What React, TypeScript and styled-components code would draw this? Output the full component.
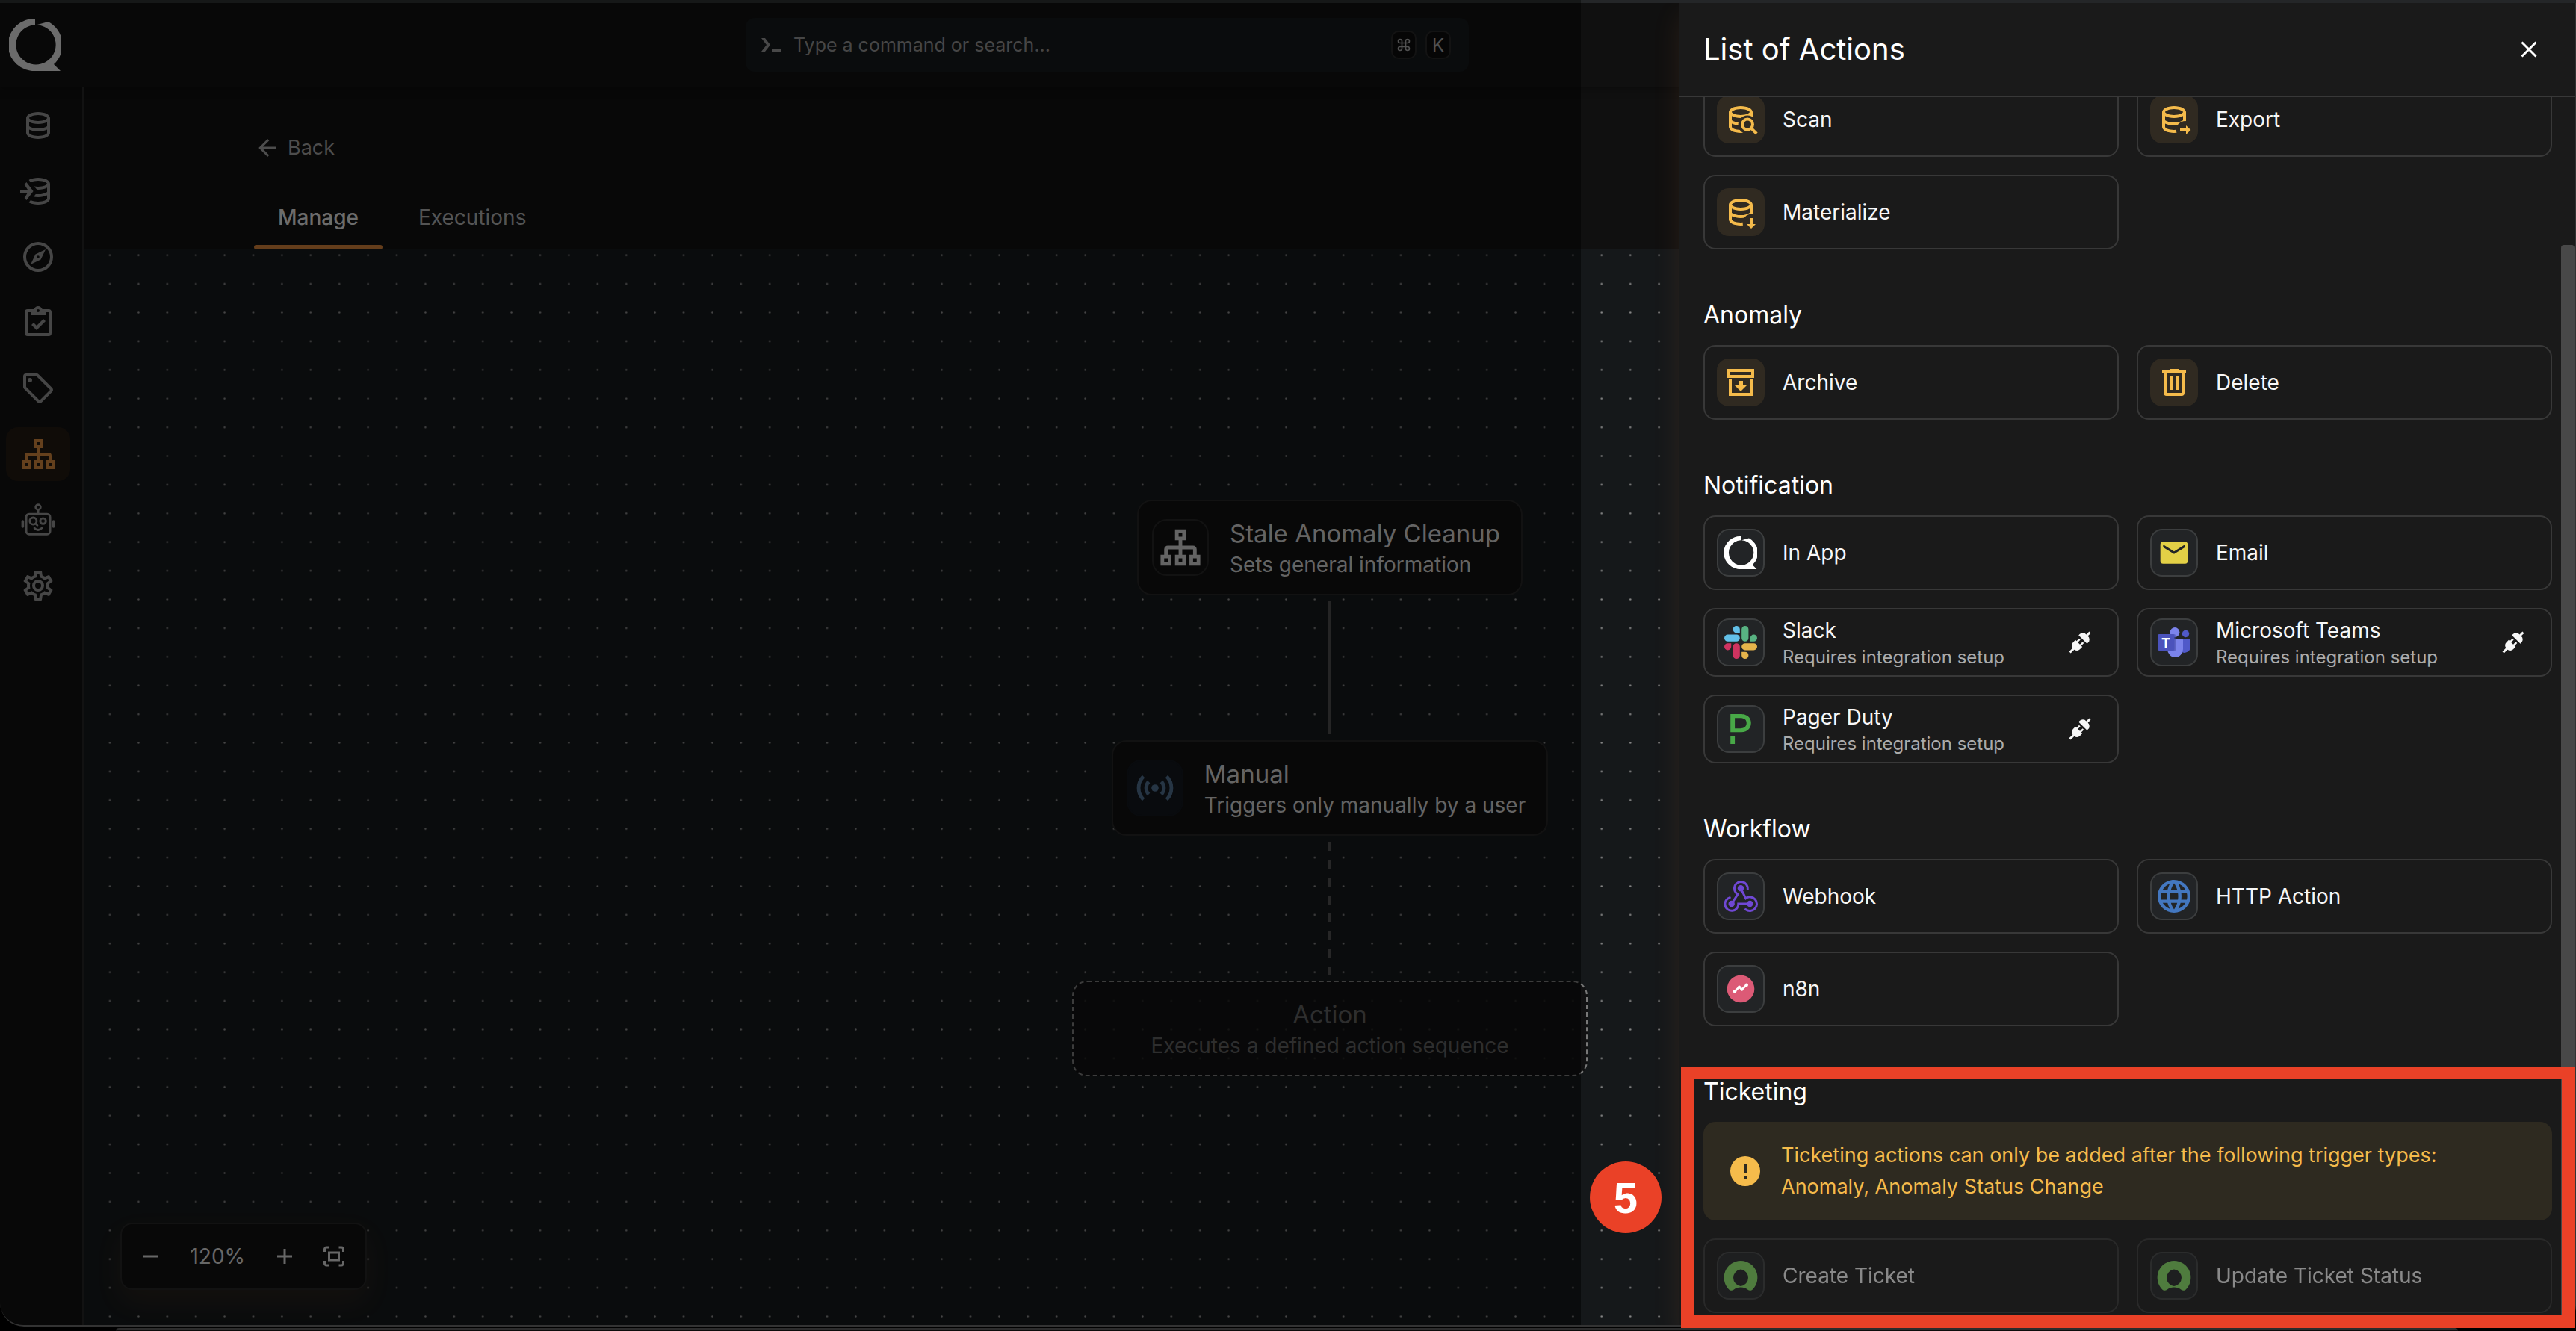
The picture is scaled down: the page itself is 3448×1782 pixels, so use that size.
import React from "react";
import styled, { createGlobalStyle, css } from "styled-components";
import { Command } from "lucide-react";
import { SiPagerduty } from "react-icons/si";

const GlobalStyle = createGlobalStyle`
  * { box-sizing: border-box; }
  body {
    margin: 0;
    background: #000;
    color: #fff;
    font-family: Inter, "Liberation Sans", sans-serif;
    font-size: 28px;
    overflow: hidden;
  }
  button { font: inherit; color: inherit; background: none; border: 0; padding: 0; text-align: left; }
  svg { display: block; flex: none; }
`;

/* ---------- window ---------- */

const Page = styled.div`
  position: relative;
  display: flex;
  flex-direction: column;
  height: 100vh;
`;

const Frame = styled.div`
  position: relative;
  flex: 1;
  min-height: 0;
  display: flex;
  flex-direction: column;
  background: #101010;
  border-right: 2px solid #333;
  border-bottom: 2px solid #333;
  border-radius: 0 0 28px 32px;
  overflow: hidden;
`;

const TopStrip = styled.div`
  flex: none;
  height: 4px;
  background: linear-gradient(to right, #161818 calc(100% - 1332px), #242628 0);
`;

const Dock = styled.div`
  flex: none;
  height: 4px;
  margin: 2px 158px 0 155px;
  background: #0c0c0c;
  border-top: 2px solid #2c2c2c;
  border-radius: 24px 24px 0 0;
`;

const Header = styled.header`
  flex: none;
  height: 112px;
  display: grid;
  grid-template-columns: 986px 968px 1fr;
  align-items: center;
  padding-left: 12px;
  color: #d6d6d6;
  box-shadow: 0 2px 12px rgba(0, 0, 0, 0.4);
`;

const SearchBox = styled.label`
  height: 72px;
  display: flex;
  align-items: center;
  gap: 12px;
  padding: 0 24px 0 18px;
  border-radius: 12px;
  background: #15181a;
  color: #909090;
`;

const SearchInput = styled.input`
  flex: 1;
  min-width: 0;
  padding: 0 0 0 2px;
  border: 0;
  outline: 0;
  background: none;
  color: inherit;
  font: inherit;
  font-size: 25px;
  &::placeholder { color: #8c8c8c; opacity: 1; }
`;

const Kbd = styled.kbd`
  width: 34px;
  height: 38px;
  display: grid;
  place-items: center;
  border: 2px solid #262626;
  border-radius: 10px;
  background: #0c0c0c;
  color: #a0a0a0;
  font-family: inherit;
  font-size: 24px;
`;

const Body = styled.div`
  flex: 1;
  min-height: 0;
  display: flex;
`;

const Sidebar = styled.nav`
  flex: none;
  width: 112px;
  display: flex;
  flex-direction: column;
  gap: 16px;
  padding: 16px 16px 16px 8px;
  border-right: 2px solid #242424;
`;

const NavButton = styled.button<{ $active?: boolean }>`
  height: 72px;
  display: grid;
  place-items: center;
  border-radius: 16px;
  color: ${(p) => (p.$active ? "#c8803a" : "#8c8c8c")};
  background: ${(p) => (p.$active ? "#211811" : "transparent")};
`;

const Main = styled.main`
  flex: 1;
  min-width: 0;
  display: flex;
  flex-direction: column;
`;

const Toolbar = styled.div`
  flex: none;
  height: 218px;
  display: flex;
  flex-direction: column;
  justify-content: flex-end;
  align-items: flex-start;
  gap: 32px;
  padding-left: 228px;
`;

const BackLink = styled.a`
  display: flex;
  align-items: center;
  gap: 9px;
  line-height: 40px;
  color: #9a9a9a;
  font-size: 27px;
  text-decoration: none;
`;

const Tabs = styled.div`
  display: flex;
  gap: 16px;
`;

const Tab = styled.button<{ $active?: boolean }>`
  position: relative;
  height: 84px;
  padding: 0 32px 2px;
  font-size: 28px;
  font-weight: ${(p) => (p.$active ? 500 : 400)};
  color: ${(p) => (p.$active ? "#d8d8d8" : "#a8a8a8")};
  ${(p) =>
    p.$active &&
    css`
      &::after {
        content: "";
        position: absolute;
        inset: auto 0 0 0;
        height: 6px;
        border-radius: 3px;
        background: #c87a36;
      }
    `}
`;

/* ---------- workflow canvas ---------- */

const Canvas = styled.section`
  position: relative;
  flex: 1;
  min-height: 0;
  background: #15181a;
  overflow: hidden;
`;

const Dots = styled.svg`
  position: absolute;
  inset: 0;
  width: 100%;
  height: 100%;
`;

const Flow = styled.div`
  position: absolute;
  top: 335px;
  left: 1323px;
  width: 690px;
  display: flex;
  flex-direction: column;
  align-items: center;
`;

const Node = styled.div<{ $placeholder?: boolean }>`
  height: 128px;
  display: flex;
  align-items: center;
  gap: 28px;
  padding: 0 28px 0 18px;
  border: 2px solid #242424;
  border-radius: 20px;
  background: #101010;
  color: #c8c8c8;
  ${(p) =>
    p.$placeholder &&
    css`
      width: 100%;
      justify-content: center;
      padding: 0;
      text-align: center;
      color: #5c5c5c;
      border: 2px dashed #787878;
      background: rgba(16, 16, 16, 0.8);
    `}
`;

const NodeIcon = styled.div<{ $tinted?: boolean }>`
  width: 76px;
  height: 76px;
  display: grid;
  place-items: center;
  border-radius: 20px;
  border: 2px solid ${(p) => (p.$tinted ? "#12161c" : "#242424")};
  background: ${(p) => (p.$tinted ? "#12161c" : "#101010")};
  color: ${(p) => (p.$tinted ? "#4c6a88" : "#c8c8c8")};
`;

const NodeTitle = styled.div`
  padding-top: 2px;
  font-size: 33px;
  line-height: 44px;
`;

const NodeText = styled.div`
  font-size: 28px;
  line-height: 40px;
`;

const Edge = styled.div<{ $dashed?: boolean }>`
  width: 4px;
  height: 178px;
  margin: 8px 0;
  background: ${(p) =>
    p.$dashed ? "repeating-linear-gradient(#4e4e4e 0 12px, transparent 12px 24px)" : "#4a4a4a"};
`;

const ZoomBar = styled.div`
  position: absolute;
  left: 49px;
  bottom: 47px;
  height: 90px;
  width: 330px;
  display: flex;
  align-items: center;
  justify-content: space-between;
  padding: 0 28px 0 25px;
  border: 2px solid #242424;
  border-radius: 16px;
  background: #101010;
  color: #cecece;
  box-shadow: 0 16px 36px rgba(255, 150, 60, 0.08);
`;

const Scrim = styled.div`
  position: absolute;
  inset: 0 1330px 0 0;
  background: rgba(0, 0, 0, 0.5);
`;

/* ---------- drawer ---------- */

const Drawer = styled.aside`
  position: absolute;
  inset: 0 0 0 auto;
  width: 1198px;
  display: flex;
  flex-direction: column;
  background: #1a1a1a;
  box-shadow: 0 16px 36px rgba(255, 150, 80, 0.1);
`;

const DrawerHeader = styled.div`
  flex: none;
  height: 126px;
  display: flex;
  align-items: center;
  justify-content: space-between;
  padding: 0 43px 0 32px;
  border-bottom: 2px solid #383838;
`;

const DrawerTitle = styled.h2`
  margin: 0;
  font-size: 40px;
  font-weight: 400;
  line-height: 56px;
`;

const IconButton = styled.button`
  width: 36px;
  height: 36px;
  display: grid;
  place-items: center;
`;

const DrawerBody = styled.div`
  position: relative;
  flex: 1;
  min-height: 0;
  display: flex;
  flex-direction: column;
  justify-content: flex-end;
  gap: 64px;
  padding: 0 30px 16px 32px;
  overflow: hidden;
`;

const ScrollThumb = styled.div`
  position: absolute;
  top: 198px;
  right: 0;
  bottom: 0;
  width: 18px;
  border-radius: 4px;
  background: #484848;
`;

const Section = styled.section`
  flex: none;
  display: flex;
  flex-direction: column;
`;

const SectionTitle = styled.h3`
  margin: 0 0 16px;
  font-size: 32px;
  font-weight: 400;
  line-height: 48px;
`;

const Cards = styled.div`
  display: grid;
  grid-template-columns: 1fr 1fr;
  gap: 24px;
`;

const Card = styled.button<{ $compact?: boolean }>`
  display: flex;
  align-items: center;
  gap: 24px;
  padding: ${(p) => (p.$compact ? "8px 32px 8px 16px" : "16px")};
  border: 2px solid #383838;
  border-radius: 16px;
  color: #f7f7f7;
  &:disabled { opacity: 0.5; }
`;

const CardIcon = styled.span<{ $amber?: boolean }>`
  width: 64px;
  height: 64px;
  flex: none;
  display: grid;
  place-items: center;
  border-radius: 16px;
  border: 2px solid ${(p) => (p.$amber ? "#302a21" : "#3c3e3f")};
  background: ${(p) => (p.$amber ? "#302a21" : "#222426")};
  color: ${(p) => (p.$amber ? "#f5bb4b" : "#fff")};
`;

const CardText = styled.span`
  flex: 1;
  display: flex;
  flex-direction: column;
`;

const CardName = styled.span`
  font-size: 28px;
  line-height: 40px;
`;

const CardNote = styled.span`
  font-size: 24px;
  line-height: 32px;
  color: #ababab;
`;

const Banner = styled.div`
  display: flex;
  align-items: center;
  gap: 24px;
  margin-bottom: 24px;
  padding: 24px 32px;
  border-radius: 16px;
  background: #2e2a20;
  color: #f5bb4b;
  font-size: 27px;
  line-height: 42px;
`;

/* ---------- annotation ---------- */

const Callout = styled.div`
  position: absolute;
  right: 2px;
  bottom: 4px;
  width: 1196px;
  height: 350px;
  border: 17px solid #ea4127;
`;

const StepBadge = styled.div`
  position: absolute;
  right: 1224px;
  bottom: 131px;
  width: 96px;
  height: 96px;
  display: grid;
  place-items: center;
  border-radius: 50%;
  background: #ea4127;
  font-family: "Liberation Sans", sans-serif;
  font-size: 58px;
  font-weight: 700;
`;

/* ---------- icons ---------- */

const Glyph = ({ d, size = 48 }: { d: string; size?: number }) => (
  <svg width={size} height={size} viewBox="0 0 24 24" fill="currentColor" fillRule="evenodd">
    <path d={d} />
  </svg>
);

const DB =
  "M12 3C7.58 3 4 4.79 4 7V17C4 19.21 7.59 21 12 21S20 19.21 20 17V7C20 4.79 16.42 3 12 3M18 17C18 17.5 15.87 19 12 19S6 17.5 6 17V14.77C7.61 15.55 9.72 16 12 16S16.39 15.55 18 14.77V17M18 12.45C16.7 13.4 14.42 14 12 14C9.58 14 7.3 13.4 6 12.45V9.64C7.47 10.47 9.61 11 12 11C14.39 11 16.53 10.47 18 9.64V12.45M12 9C8.13 9 6 7.5 6 7S8.13 5 12 5C15.87 5 18 6.5 18 7S15.87 9 12 9Z";
const COMPASS =
  "M7,17L10.2,10.2L17,7L13.8,13.8L7,17M12,11.1A0.9,0.9 0 0,0 11.1,12A0.9,0.9 0 0,0 12,12.9A0.9,0.9 0 0,0 12.9,12A0.9,0.9 0 0,0 12,11.1M12,2A10,10 0 0,1 22,12A10,10 0 0,1 12,22A10,10 0 0,1 2,12A10,10 0 0,1 12,2M12,4A8,8 0 0,0 4,12A8,8 0 0,0 12,20A8,8 0 0,0 20,12A8,8 0 0,0 12,4Z";
const CLIPBOARD =
  "M19,3H14.82C14.4,1.84 13.3,1 12,1C10.7,1 9.6,1.84 9.18,3H5A2,2 0 0,0 3,5V19A2,2 0 0,0 5,21H19A2,2 0 0,0 21,19V5A2,2 0 0,0 19,3M12,3A1,1 0 0,1 13,4A1,1 0 0,1 12,5A1,1 0 0,1 11,4A1,1 0 0,1 12,3M7,7H17V5H19V19H5V5H7V7M7.5,13.5L9,12L11,14L15.5,9.5L17,11L11,17L7.5,13.5Z";
const TAG =
  "M21.41 11.58L12.41 2.58A2 2 0 0 0 11 2H4A2 2 0 0 0 2 4V11A2 2 0 0 0 2.59 12.42L11.59 21.42A2 2 0 0 0 13 22A2 2 0 0 0 14.41 21.41L21.41 14.41A2 2 0 0 0 22 13A2 2 0 0 0 21.41 11.58M13 20L4 11V4H11L20 13M6.5 5A1.5 1.5 0 1 1 5 6.5A1.5 1.5 0 0 1 6.5 5Z";
const SITEMAP =
  "M9 2H15V8H13V11H19A2 2 0 0 1 21 13V16H23V22H17V16H19V13H13V16H15V22H9V16H11V13H5V16H7V22H1V16H3V13A2 2 0 0 1 5 11H11V8H9ZM11 4V6H13V4ZM3 18V20H5V18ZM11 18V20H13V18ZM19 18V20H21V18Z";
const COG =
  "M12,8A4,4 0 0,1 16,12A4,4 0 0,1 12,16A4,4 0 0,1 8,12A4,4 0 0,1 12,8M12,10A2,2 0 0,0 10,12A2,2 0 0,0 12,14A2,2 0 0,0 14,12A2,2 0 0,0 12,10M10,22C9.75,22 9.54,21.82 9.5,21.58L9.13,18.93C8.5,18.68 7.96,18.34 7.44,17.94L4.95,18.95C4.73,19.03 4.46,18.95 4.34,18.73L2.34,15.27C2.21,15.05 2.27,14.78 2.46,14.63L4.57,12.97L4.5,12L4.57,11L2.46,9.37C2.27,9.22 2.21,8.95 2.34,8.73L4.34,5.27C4.46,5.05 4.73,4.96 4.95,5.05L7.44,6.05C7.96,5.66 8.5,5.32 9.13,5.07L9.5,2.42C9.54,2.18 9.75,2 10,2H14C14.25,2 14.46,2.18 14.5,2.42L14.87,5.07C15.5,5.32 16.04,5.66 16.56,6.05L19.05,5.05C19.27,4.96 19.54,5.05 19.66,5.27L21.66,8.73C21.79,8.95 21.73,9.22 21.54,9.37L19.43,11L19.5,12L19.43,13L21.54,14.63C21.73,14.78 21.79,15.05 21.66,15.27L19.66,18.73C19.54,18.95 19.27,19.04 19.05,18.95L16.56,17.95C16.04,18.34 15.5,18.68 14.87,18.93L14.5,21.58C14.46,21.82 14.25,22 14,22H10M11.25,4L10.88,6.61C9.68,6.86 8.62,7.5 7.85,8.39L5.44,7.35L4.69,8.65L6.8,10.2C6.4,11.37 6.4,12.64 6.8,13.8L4.68,15.36L5.43,16.66L7.86,15.62C8.63,16.5 9.68,17.14 10.87,17.38L11.24,20H12.76L13.13,17.39C14.32,17.14 15.37,16.5 16.14,15.62L18.57,16.66L19.32,15.36L17.2,13.81C17.6,12.64 17.6,11.37 17.2,10.2L19.31,8.65L18.56,7.35L16.15,8.39C15.38,7.5 14.32,6.86 13.12,6.62L12.75,4H11.25Z";
const ARROW_LEFT = "M20,11V13H8L13.5,18.5L12.08,19.92L4.16,12L12.08,4.08L13.5,5.5L8,11H20Z";
const TRASH =
  "M9,3V4H4V6H5V19A2,2 0 0,0 7,21H17A2,2 0 0,0 19,19V6H20V4H15V3H9M7,6H17V19H7V6M9,8V17H11V8H9M13,8V17H15V8H13Z";
const ARCHIVE = "M3 3H21V9H3ZM5 5V7H19V5ZM4 10H6V19H18V10H20V21H4ZM10.5 11H13.5V14H16L12 18L8 14H10.5Z";
const MAIL =
  "M20,8L12,13L4,8V6L12,11L20,6M20,4H4C2.89,4 2,4.89 2,6V18A2,2 0 0,0 4,20H20A2,2 0 0,0 22,18V6C22,4.89 21.1,4 20,4Z";
const WEB =
  "M16.36,14C16.44,13.34 16.5,12.68 16.5,12C16.5,11.32 16.44,10.66 16.36,10H19.74C19.9,10.64 20,11.31 20,12C20,12.69 19.9,13.36 19.74,14M14.59,19.56C15.19,18.45 15.65,17.25 15.97,16H18.92C17.96,17.65 16.43,18.93 14.59,19.56M14.34,14H9.66C9.56,13.34 9.5,12.68 9.5,12C9.5,11.32 9.56,10.65 9.66,10H14.34C14.43,10.65 14.5,11.32 14.5,12C14.5,12.68 14.43,13.34 14.34,14M12,19.96C11.17,18.76 10.5,17.43 10.09,16H13.91C13.5,17.43 12.83,18.76 12,19.96M8,8H5.08C6.03,6.34 7.57,5.06 9.4,4.44C8.8,5.55 8.35,6.75 8,8M5.08,16H8C8.35,17.25 8.8,18.45 9.4,19.56C7.57,18.93 6.03,17.65 5.08,16M4.26,14C4.1,13.36 4,12.69 4,12C4,11.31 4.1,10.64 4.26,10H7.64C7.56,10.66 7.5,11.32 7.5,12C7.5,12.68 7.56,13.34 7.64,14M12,4.03C12.83,5.23 13.5,6.57 13.91,8H10.09C10.5,6.57 11.17,5.23 12,4.03M18.92,8H15.97C15.65,6.75 15.19,5.55 14.59,4.44C16.43,5.07 17.96,6.34 18.92,8M12,2C6.47,2 2,6.5 2,12A10,10 0 0,0 12,22A10,10 0 0,0 22,12A10,10 0 0,0 12,2Z";
const ALERT = "M13,13H11V7H13M13,17H11V15H13M12,2A10,10 0 0,0 2,12A10,10 0 0,0 12,22A10,10 0 0,0 22,12A10,10 0 0,0 12,2Z";

const DbWith = ({ id, cut, children }: { id: string; cut: React.ReactNode; children: React.ReactNode }) => (
  <svg width={48} height={48} viewBox="0 0 24 24" fill="currentColor" overflow="visible">
    <mask id={id} maskUnits="userSpaceOnUse" x="0" y="0" width="24" height="24">
      <rect width="24" height="24" fill="#fff" />
      {cut}
    </mask>
    <path d={DB} mask={`url(#${id})`} />
    {children}
  </svg>
);

const DbImport = () => (
  <DbWith
    id="cut-import"
    cut={
      <path d="M0 12H8M4 5.5L9.5 12L4 18.5" stroke="#000" strokeWidth="4" fill="#000" />
    }
  >
    <path d="M0 11H5L2.8 7.5L4.2 6L8.8 12L4.2 18L2.8 16.5L5 13H0Z" />
  </DbWith>
);
const DbSearch = () => (
  <DbWith id="cut-search" cut={<circle cx="16.5" cy="15.5" r="6.2" fill="#000" />}>
    <circle cx="16.5" cy="15.3" r="3.5" fill="none" stroke="currentColor" strokeWidth="2" />
    <path d="M19 17.8L22.6 21.4" stroke="currentColor" strokeWidth="2" />
  </DbWith>
);
const DbExport = () => (
  <DbWith id="cut-export" cut={<circle cx="19.4" cy="19" r="6" fill="#000" />}>
    <path d="M16 18H20V16L23.2 19L20 22V20H16Z" />
  </DbWith>
);
const DbDown = () => (
  <DbWith id="cut-down" cut={<circle cx="19.3" cy="19.2" r="6" fill="#000" />}>
    <path d="M18 16H20V20H22L19 23L16 20H18Z" />
  </DbWith>
);

const Robot = () => (
  <svg width={48} height={48} viewBox="0 0 48 48" fill="none" stroke="currentColor" strokeWidth="3" strokeLinecap="round">
    <circle cx="24" cy="7" r="3.4" strokeWidth="2.6" />
    <path d="M24 11V15" />
    <rect x="8" y="16.2" width="32" height="27" rx="4" />
    <path d="M3.4 26V33M44.6 26V33" strokeWidth="3.6" />
    <circle cx="17.4" cy="25.6" r="4.6" strokeWidth="2.8" />
    <circle cx="30.6" cy="25.6" r="3.8" strokeWidth="2.8" />
    <path d="M20.6 29L23 31.4M19 35Q24 40 29 35" strokeWidth="2.6" />
  </svg>
);

const Logo = ({ size }: { size: number }) => (
  <svg width={size} height={size} viewBox="0 0 70 70" fill="currentColor">
    <path d="M35 0A35 35 0 0 0 28 69.5L31 70H69L60 61A35 35 0 0 0 52.5 4L37 8.3A26.6 26.6 0 1 1 35 8.3Z" />
  </svg>
);

const Terminal = () => (
  <svg width={32} height={32} viewBox="0 0 32 32" fill="currentColor">
    <path d="M3 7H8L15 16L8 25H3L10 16ZM17 21H30V25H17Z" />
  </svg>
);

const Broadcast = () => (
  <svg width={58} height={58} viewBox="0 0 24 24" fill="none" stroke="currentColor" strokeWidth="2">
    <circle cx="12" cy="12" r="2" fill="currentColor" stroke="none" />
    <path d="M8.5 8.5A5 5 0 0 0 8.5 15.5M15.5 8.5A5 5 0 0 1 15.5 15.5M5.6 5.6A9 9 0 0 0 5.6 18.4M18.4 5.6A9 9 0 0 1 18.4 18.4" />
  </svg>
);

const Slack = () => (
  <svg width={44} height={44} viewBox="0 0 24 24">
    <path fill="#cf3360" d="M5.042 15.165a2.528 2.528 0 0 1-2.52 2.523A2.528 2.528 0 0 1 0 15.165a2.527 2.527 0 0 1 2.522-2.52h2.52v2.52zM6.313 15.165a2.527 2.527 0 0 1 2.521-2.52 2.527 2.527 0 0 1 2.521 2.52v6.313A2.528 2.528 0 0 1 8.834 24a2.528 2.528 0 0 1-2.521-2.522v-6.313z" />
    <path fill="#62c0e8" d="M8.834 5.042a2.528 2.528 0 0 1-2.521-2.52A2.528 2.528 0 0 1 8.834 0a2.528 2.528 0 0 1 2.521 2.522v2.52H8.834zM8.834 6.313a2.528 2.528 0 0 1 2.521 2.521 2.528 2.528 0 0 1-2.521 2.521H2.522A2.528 2.528 0 0 1 0 8.834a2.528 2.528 0 0 1 2.522-2.521h6.312z" />
    <path fill="#58b282" d="M18.956 8.834a2.528 2.528 0 0 1 2.522-2.521A2.528 2.528 0 0 1 24 8.834a2.528 2.528 0 0 1-2.522 2.521h-2.522V8.834zM17.688 8.834a2.528 2.528 0 0 1-2.523 2.521 2.527 2.527 0 0 1-2.52-2.521V2.522A2.527 2.527 0 0 1 15.165 0a2.528 2.528 0 0 1 2.523 2.522v6.312z" />
    <path fill="#e5b44b" d="M15.165 18.956a2.528 2.528 0 0 1 2.523 2.522A2.528 2.528 0 0 1 15.165 24a2.527 2.527 0 0 1-2.52-2.522v-2.522h2.52zM15.165 17.688a2.527 2.527 0 0 1-2.52-2.523 2.526 2.526 0 0 1 2.52-2.52h6.313A2.527 2.527 0 0 1 24 15.165a2.528 2.528 0 0 1-2.522 2.523h-6.313z" />
  </svg>
);

const Teams = () => (
  <svg width={44} height={44} viewBox="0 0 44 44">
    <circle cx="37.5" cy="10.5" r="4.7" fill="#5059c9" />
    <path d="M31 17H42.5A1.5 1.5 0 0 1 44 18.5V27A8 8 0 0 1 31 34Z" fill="#5059c9" />
    <circle cx="23" cy="8.5" r="6.4" fill="#7b83eb" />
    <path d="M13 17H32.5A1.5 1.5 0 0 1 34 18.5V31A10.5 11 0 0 1 13 31Z" fill="#7b83eb" />
    <path d="M17 11H22A2 2 0 0 1 24 13V32A2 2 0 0 1 22 34H14Z" fill="#3f469e" opacity="0.5" />
    <rect x="0" y="11" width="22.5" height="22" rx="2" fill="#4b53bc" />
    <text x="11" y="28.5" fill="#fff" fontSize="18" fontWeight="700" textAnchor="middle">T</text>
  </svg>
);

const Plug = () => (
  <svg width={36} height={36} viewBox="0 0 36 36" fill="#f7f7f7">
    <g transform="translate(18 18) rotate(45)">
      <path d="M-6.5 2H6.5V6.5A6.5 6 0 0 1 1.5 12.2V19H-1.5V12.2A6.5 6 0 0 1 -6.5 6.5Z" />
      <path d="M-4.5 -3H-2V3H-4.5ZM2 -3H4.5V3H2Z" />
      <path d="M-8 -5.5V-7.5A6 6 0 0 1 -1.5 -13.5V-19H1.5V-13.5A6 6 0 0 1 8 -7.5V-5.5Z" />
    </g>
  </svg>
);

const Webhook = () => (
  <svg width={60} height={60} viewBox="2 2 60 60" fill="none" stroke="#7048d4" strokeWidth="3" strokeLinecap="round">
    <path d="M41.3 22.5A9 9 0 1 0 28 29.4L19.7 42" />
    <path d="M17.3 33.7A9 9 0 1 0 28.8 42H44.3" />
    <path d="M38.5 49.5A9.3 9.3 0 1 0 38.7 34.7L32 21.3" />
    <g fill="#7048d4" stroke="none">
      <circle cx="32" cy="21.3" r="4.2" />
      <circle cx="19.7" cy="42" r="4.2" />
      <circle cx="44.3" cy="42" r="4.2" />
    </g>
  </svg>
);

const N8n = () => (
  <svg width={60} height={60} viewBox="2 2 60 60">
    <circle cx="32" cy="32" r="18.3" fill="#dc5a76" />
    <path d="M24 35.2L30 29.5L33.5 32.7L39.5 27" fill="none" stroke="#fff" strokeWidth="2.8" strokeLinejoin="round" />
    <g fill="#fff">
      <circle cx="24" cy="35.2" r="2.2" />
      <circle cx="30" cy="29.5" r="2" />
      <circle cx="33.5" cy="32.7" r="2" />
      <circle cx="39.8" cy="26.8" r="2.2" />
    </g>
  </svg>
);

const NowRing = () => (
  <svg width={60} height={60} viewBox="2 2 60 60">
    <path
      fill="#84de62"
      fillRule="evenodd"
      d="M32 12A22.5 22.5 0 0 0 16 50.2C18 52.2 20.5 52.2 22.5 50.8A15.5 15.5 0 0 1 41.5 50.8C43.5 52.2 46 52.2 48 50.2A22.5 22.5 0 0 0 32 12ZM32 23.5A11 11.3 0 0 1 32 46A11 11.3 0 0 1 32 23.5Z"
    />
  </svg>
);

const Web = () => (
  <svg width={44} height={44} viewBox="2 2 20 20" fill="#4377c0">
    <path d={WEB} />
  </svg>
);

const CloseX = () => (
  <svg width={36} height={36} viewBox="0 0 36 36" stroke="#fff" strokeWidth="3">
    <path d="M8.5 8.5L27.5 27.5M27.5 8.5L8.5 27.5" />
  </svg>
);

const ZoomGlyph = ({ d }: { d: string }) => (
  <svg width={28} height={28} viewBox="0 0 28 28" fill="none" stroke="currentColor" strokeWidth="3">
    <path d={d} />
  </svg>
);

/* ---------- data ---------- */

type Action = {
  name: string;
  icon: React.ReactNode;
  amber?: boolean;
  needsSetup?: boolean;
  disabled?: boolean;
};

const sections: { title?: string; notice?: React.ReactNode; actions: Action[] }[] = [
  {
    actions: [
      { name: "Scan", icon: <DbSearch />, amber: true },
      { name: "Export", icon: <DbExport />, amber: true },
      { name: "Materialize", icon: <DbDown />, amber: true },
    ],
  },
  {
    title: "Anomaly",
    actions: [
      { name: "Archive", icon: <Glyph d={ARCHIVE} />, amber: true },
      { name: "Delete", icon: <Glyph d={TRASH} />, amber: true },
    ],
  },
  {
    title: "Notification",
    actions: [
      { name: "In App", icon: <Logo size={44} /> },
      {
        name: "Email",
        icon: (
          <svg width={44} height={44} viewBox="0 0 24 24" fill="#e3d046">
            <path d={MAIL} />
          </svg>
        ),
      },
      { name: "Slack", icon: <Slack />, needsSetup: true },
      { name: "Microsoft Teams", icon: <Teams />, needsSetup: true },
      { name: "Pager Duty", icon: <SiPagerduty size={40} color="#48a847" />, needsSetup: true },
    ],
  },
  {
    title: "Workflow",
    actions: [
      { name: "Webhook", icon: <Webhook /> },
      { name: "HTTP Action", icon: <Web /> },
      { name: "n8n", icon: <N8n /> },
    ],
  },
  {
    title: "Ticketing",
    notice: (
      <>
        Ticketing actions can only be added after the following trigger types:
        <br />
        Anomaly, Anomaly Status Change
      </>
    ),
    actions: [
      { name: "Create Ticket", icon: <NowRing />, disabled: true },
      { name: "Update Ticket Status", icon: <NowRing />, disabled: true },
    ],
  },
];

const navItems: { label: string; icon: React.ReactNode; active?: boolean }[] = [
  { label: "Datastores", icon: <Glyph d={DB} /> },
  { label: "Enrichment", icon: <DbImport /> },
  { label: "Explore", icon: <Glyph d={COMPASS} /> },
  { label: "Library", icon: <Glyph d={CLIPBOARD} /> },
  { label: "Tags", icon: <Glyph d={TAG} /> },
  { label: "Flows", icon: <Glyph d={SITEMAP} />, active: true },
  { label: "Agent", icon: <Robot /> },
  { label: "Settings", icon: <Glyph d={COG} /> },
];

/* ---------- app ---------- */

const ActionCard = ({ name, icon, amber, needsSetup, disabled }: Action) => (
  <Card $compact={needsSetup} disabled={disabled}>
    <CardIcon $amber={amber}>{icon}</CardIcon>
    <CardText>
      <CardName>{name}</CardName>
      {needsSetup && <CardNote>Requires integration setup</CardNote>}
    </CardText>
    {needsSetup && <Plug />}
  </Card>
);

export default function App() {
  return (
    <Page>
      <GlobalStyle />
      <TopStrip />
      <Frame>
        <Header>
          <Logo size={70} />
          <SearchBox>
            <Terminal />
            <SearchInput type="text" placeholder="Type a command or search..." aria-label="Search" />
            <Kbd>
              <Command size={20} />
            </Kbd>
            <Kbd>K</Kbd>
          </SearchBox>
        </Header>
        <Body>
          <Sidebar>
            {navItems.map((item) => (
              <NavButton key={item.label} aria-label={item.label} $active={item.active}>
                {item.icon}
              </NavButton>
            ))}
          </Sidebar>
          <Main>
            <Toolbar>
              <BackLink href="#">
                <Glyph d={ARROW_LEFT} size={36} />
                Back
              </BackLink>
              <Tabs>
                <Tab $active>Manage</Tab>
                <Tab>Executions</Tab>
              </Tabs>
            </Toolbar>
            <Canvas>
              <Dots>
                <defs>
                  <pattern
                    id="grid"
                    width="32"
                    height="32"
                    patternUnits="userSpaceOnUse"
                    patternTransform="translate(15.8 -11.5) scale(1.2)"
                  >
                    <circle cx="16" cy="16" r="1" fill="#8e8e8e" />
                  </pattern>
                </defs>
                <rect x="30" width="100%" height="100%" fill="url(#grid)" />
              </Dots>
              <Flow>
                <Node>
                  <NodeIcon>
                    <Glyph d={SITEMAP} size={58} />
                  </NodeIcon>
                  <div>
                    <NodeTitle>Stale Anomaly Cleanup</NodeTitle>
                    <NodeText>Sets general information</NodeText>
                  </div>
                </Node>
                <Edge />
                <Node>
                  <NodeIcon $tinted>
                    <Broadcast />
                  </NodeIcon>
                  <div>
                    <NodeTitle>Manual</NodeTitle>
                    <NodeText>Triggers only manually by a user</NodeText>
                  </div>
                </Node>
                <Edge $dashed />
                <Node $placeholder>
                  <div>
                    <NodeTitle>Action</NodeTitle>
                    <NodeText>Executes a defined action sequence</NodeText>
                  </div>
                </Node>
              </Flow>
              <ZoomBar>
                <button aria-label="Zoom out">
                  <ZoomGlyph d="M4 14H24" />
                </button>
                120%
                <button aria-label="Zoom in">
                  <ZoomGlyph d="M4 14H24M14 4V24" />
                </button>
                <button aria-label="Fit view">
                  <ZoomGlyph d="M1.5 8V4.5A2.5 2.5 0 0 1 4 2H7.5M20.5 2H24A2.5 2.5 0 0 1 26.5 4.5V8M26.5 20V23.5A2.5 2.5 0 0 1 24 26H20.5M7.5 26H4A2.5 2.5 0 0 1 1.5 23.5V20M7.5 9H20.5V19H7.5Z" />
                </button>
              </ZoomBar>
            </Canvas>
          </Main>
        </Body>
        <Scrim />
        <Drawer>
          <DrawerHeader>
            <DrawerTitle>List of Actions</DrawerTitle>
            <IconButton aria-label="Close">
              <CloseX />
            </IconButton>
          </DrawerHeader>
          <DrawerBody>
            {sections.map((section, i) => (
              <Section key={i}>
                {section.title && <SectionTitle>{section.title}</SectionTitle>}
                {section.notice && (
                  <Banner role="alert">
                    <Glyph d={ALERT} />
                    <span>{section.notice}</span>
                  </Banner>
                )}
                <Cards>
                  {section.actions.map((action) => (
                    <ActionCard key={action.name} {...action} />
                  ))}
                </Cards>
              </Section>
            ))}
            <ScrollThumb />
          </DrawerBody>
        </Drawer>
      </Frame>
      <Dock />
      <Callout />
      <StepBadge>5</StepBadge>
    </Page>
  );
}
